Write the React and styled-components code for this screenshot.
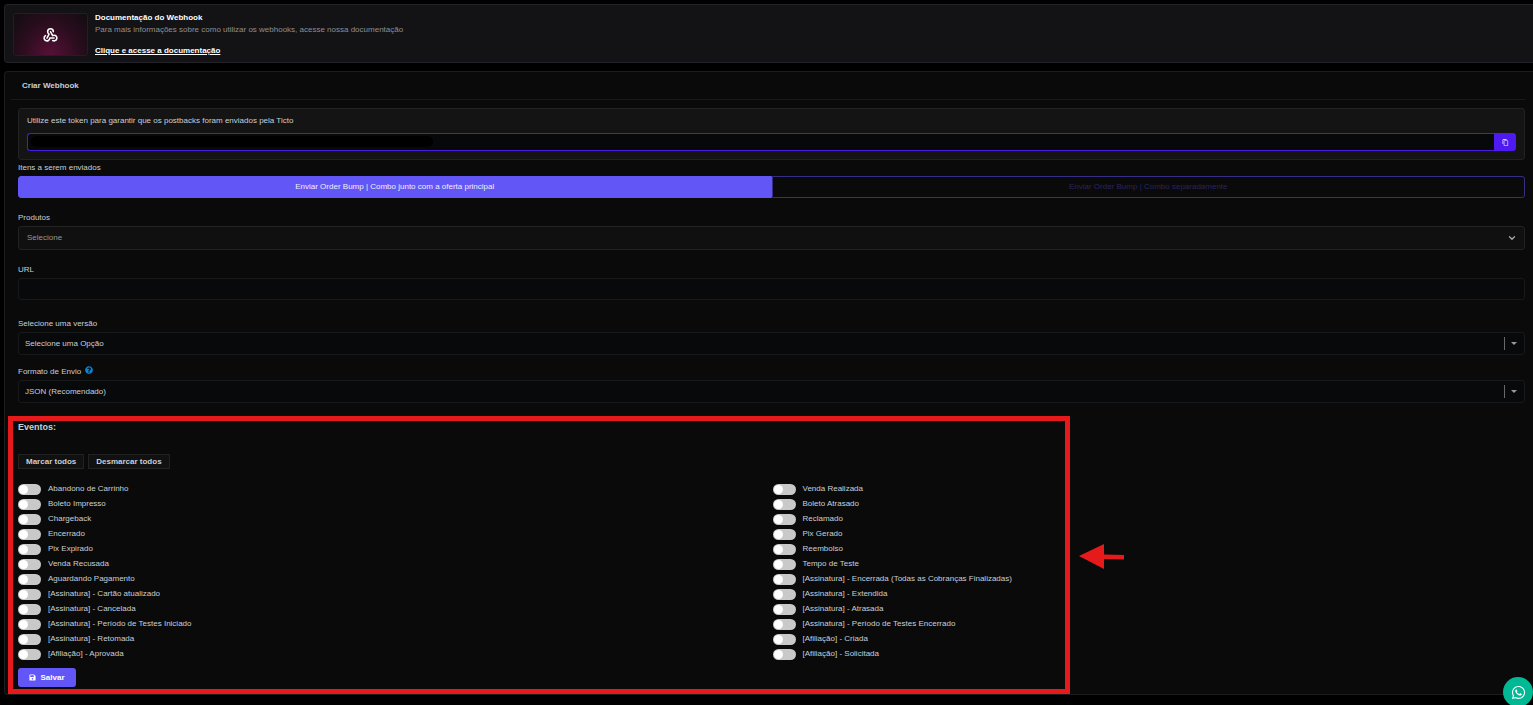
import React from "react";
import styled, { createGlobalStyle } from "styled-components";
import { FaWhatsapp, FaSave, FaQuestionCircle } from "react-icons/fa";
import { LuChevronDown } from "react-icons/lu";
import { MdContentCopy } from "react-icons/md";
import { TbWebhook } from "react-icons/tb";

const GlobalStyle = createGlobalStyle`
  * {
    box-sizing: border-box;
  }

  body {
    margin: 0;
    background-color: #000;
    color: #c9cfd8;
    font-family: "Liberation Sans", Arial, sans-serif;
    font-size: 8px;
    line-height: 12px;
  }

  button, input, select {
    margin: 0;
    font-family: inherit;
    font-size: inherit;
    line-height: inherit;
    color: inherit;
  }
`;

const Page = styled.main`
  display: flex;
  flex-direction: column;
  gap: 8px;
  min-height: 100vh;
  padding: 4px 0 10px 4px;
  overflow: hidden;
`;

const Banner = styled.section`
  display: flex;
  align-items: center;
  gap: 7px;
  padding: 7px 8px 5px;
  background-color: #131315;
  border: 1px solid #222228;
  border-right: 0;
  border-radius: 4px 0 0 4px;
`;

const BannerThumb = styled.div`
  display: flex;
  align-items: center;
  justify-content: center;
  width: 75px;
  height: 43px;
  color: #fff;
  background: radial-gradient(ellipse at 50% 110%, #5a1138 0%, #2c0d1f 55%, #110c10 100%);
  border: 1px solid #241d22;
  border-radius: 3px;
`;

const BannerText = styled.div`
  display: flex;
  flex-direction: column;
  align-items: flex-start;
`;

const BannerTitle = styled.h1`
  margin: 0;
  color: #fff;
  font-size: 8px;
  font-weight: 700;
`;

const BannerInfo = styled.p`
  margin: 0 0 9px;
  color: #8f8f92;
`;

const BannerLink = styled.a`
  color: #fff;
  font-weight: 700;
  text-decoration: underline;
`;

const Panel = styled.section`
  padding: 0 8px 7px 6px;
  background-color: #0a0a0a;
  border: 1px solid #1d1d1f;
  border-right: 0;
  border-radius: 4px 0 0 4px;
`;

const PanelTitle = styled.h2`
  margin: 0;
  padding: 8px 11px 7px;
  font-size: 8px;
  font-weight: 700;
  border-bottom: 1px solid #1a1a1b;
`;

const Form = styled.form`
  display: flex;
  flex-direction: column;
  padding: 8px 0 0 7px;
`;

const TokenBox = styled.div`
  display: flex;
  flex-direction: column;
  gap: 6px;
  padding: 6px 8px 8px;
  background-color: #141414;
  border: 1px solid #222;
  border-radius: 3px;
`;

const TokenRow = styled.div`
  display: flex;
  height: 18px;
`;

const TokenField = styled.div`
  position: relative;
  display: flex;
  flex: 1;
`;

const TokenInput = styled.input`
  flex: 1;
  min-width: 0;
  padding: 0 6px;
  background-color: #06080a;
  border: 1px solid #4a1ae0;
  border-right: 0;
  border-radius: 3px 0 0 3px;
  outline: 0;
`;

const TokenRedaction = styled.span`
  position: absolute;
  top: 3px;
  left: 4px;
  width: 402px;
  height: 11px;
  background-color: #000;
  border-radius: 5px;
`;

const CopyButton = styled.button`
  display: flex;
  align-items: center;
  justify-content: center;
  width: 22px;
  padding: 0;
  color: #fff;
  background-color: #4f1af0;
  border: 0;
  border-radius: 0 3px 3px 0;
`;

const Field = styled.div`
  display: flex;
  flex-direction: column;
  gap: 2px;
  margin-top: ${(props) => props.$space}px;
`;

const FieldLabel = styled.label`
  display: flex;
  align-items: ${(props) => (props.$help ? "flex-start" : "center")};
  gap: 4px;
  height: 12px;

  svg {
    color: #0a84d6;
  }
`;

const SendGroup = styled.div`
  display: grid;
  grid-template-columns: 1fr 1fr;
`;

const SendOption = styled.button`
  height: 22px;
  padding: 0;
  color: ${(props) => (props.$active ? "#f0eefc" : "#2a2460")};
  background-color: ${(props) => (props.$active ? "#6356f6" : "transparent")};
  border: 1px solid ${(props) => (props.$active ? "#6356f6" : "#352d86")};
  border-radius: ${(props) => (props.$active ? "3px 0 0 3px" : "0 3px 3px 0")};
`;

const SelectWrapper = styled.div`
  position: relative;
  display: flex;
`;

const Select = styled.select`
  flex: 1;
  height: ${(props) => (props.$light ? 24 : 23)}px;
  padding: 0 ${(props) => (props.$light ? 8 : 6)}px;
  appearance: none;
  color: ${(props) => (props.$light ? "#96969a" : "inherit")};
  background-color: ${(props) => (props.$light ? "#101010" : "#07090b")};
  border: 1px solid ${(props) => (props.$light ? "#222" : "#17191b")};
  border-radius: 3px;
`;

const SelectMark = styled.span`
  position: absolute;
  top: 0;
  right: 8px;
  bottom: 0;
  display: flex;
  align-items: center;
  gap: 6px;
  color: #aaa;
  pointer-events: none;
`;

const Separator = styled.span`
  width: 1px;
  height: 13px;
  background-color: #66686a;
`;

const Caret = styled.span`
  border: 3px solid transparent;
  border-top-color: #999;
  border-bottom: 0;
`;

const UrlInput = styled.input`
  height: 22px;
  padding: 0 8px;
  background-color: #07090b;
  border: 1px solid #17191b;
  border-radius: 3px;
`;

const Events = styled.section`
  position: relative;
  margin-top: 18px;
`;

const Highlight = styled.div`
  position: absolute;
  top: -5px;
  bottom: -7px;
  left: -10px;
  width: 70.5%;
  border: 5px solid #e61a1a;
  pointer-events: none;
`;

const Arrow = styled.svg`
  position: absolute;
  top: 123px;
  left: calc(70.5% - 1px);
  width: 46px;
  height: 26px;
`;

const EventsTitle = styled.h3`
  margin: 0 0 21px;
  font-size: 9px;
  font-weight: 700;
`;

const MarkButtons = styled.div`
  display: flex;
  gap: 4px;
`;

const MarkButton = styled.button`
  height: 15px;
  padding: 0 7px;
  font-weight: 700;
  background-color: #111;
  border: 1px solid #222;
`;

const EventGrid = styled.div`
  display: grid;
  grid-template-columns: 1fr 1fr;
  column-gap: 2px;
  padding-top: 12px;
`;

const EventItem = styled.label`
  display: flex;
  align-items: center;
  gap: 7px;
  height: 15px;
`;

const Toggle = styled.input`
  position: relative;
  top: 1px;
  width: 23px;
  height: 11px;
  appearance: none;
  background-color: #c9c9c9;
  border-radius: 6px;

  &::before {
    content: "";
    position: absolute;
    top: 1px;
    left: 1px;
    width: 9px;
    height: 9px;
    background-color: #fff;
    border-radius: 50%;
  }

  &:checked {
    background-color: #6356f6;
  }

  &:checked::before {
    left: 13px;
  }
`;

const SaveButton = styled.button`
  display: flex;
  align-items: center;
  justify-content: center;
  gap: 4px;
  width: 58px;
  height: 19px;
  margin-top: 7px;
  padding: 0;
  color: #fff;
  font-weight: 700;
  background-color: #6356f6;
  border: 0;
  border-radius: 3px;
`;

const WhatsappLink = styled.a`
  position: fixed;
  right: 0;
  bottom: -2px;
  display: flex;
  align-items: center;
  justify-content: center;
  width: 30px;
  height: 30px;
  color: #fff;
  background-color: #00b894;
  border-radius: 50%;
`;

const events = [
  ["Abandono de Carrinho", "Venda Realizada"],
  ["Boleto Impresso", "Boleto Atrasado"],
  ["Chargeback", "Reclamado"],
  ["Encerrado", "Pix Gerado"],
  ["Pix Expirado", "Reembolso"],
  ["Venda Recusada", "Tempo de Teste"],
  ["Aguardando Pagamento", "[Assinatura] - Encerrada (Todas as Cobranças Finalizadas)"],
  ["[Assinatura] - Cartão atualizado", "[Assinatura] - Extendida"],
  ["[Assinatura] - Cancelada", "[Assinatura] - Atrasada"],
  ["[Assinatura] - Período de Testes Iniciado", "[Assinatura] - Período de Testes Encerrado"],
  ["[Assinatura] - Retomada", "[Afiliação] - Criada"],
  ["[Afiliação] - Aprovada", "[Afiliação] - Solicitada"],
];

function DarkSelect({ id, option }) {
  return (
    <SelectWrapper>
      <Select id={id}>
        <option>{option}</option>
      </Select>
      <SelectMark>
        <Separator />
        <Caret />
      </SelectMark>
    </SelectWrapper>
  );
}

export default function App() {
  return (
    <>
      <GlobalStyle />
      <Page>
        <Banner>
          <BannerThumb>
            <TbWebhook size={17} strokeWidth={2.2} />
          </BannerThumb>
          <BannerText>
            <BannerTitle>Documentação do Webhook</BannerTitle>
            <BannerInfo>
              Para mais informações sobre como utilizar os webhooks, acesse nossa documentação
            </BannerInfo>
            <BannerLink href="#docs">Clique e acesse a documentação</BannerLink>
          </BannerText>
        </Banner>

        <Panel>
          <PanelTitle>Criar Webhook</PanelTitle>
          <Form onSubmit={(e) => e.preventDefault()}>
            <TokenBox>
              <label htmlFor="token">
                Utilize este token para garantir que os postbacks foram enviados pela Ticto
              </label>
              <TokenRow>
                <TokenField>
                  <TokenInput id="token" readOnly />
                  <TokenRedaction />
                </TokenField>
                <CopyButton type="button" aria-label="Copiar">
                  <MdContentCopy size={7} />
                </CopyButton>
              </TokenRow>
            </TokenBox>

            <Field $space={2}>
              <FieldLabel as="span" id="items">Itens a serem enviados</FieldLabel>
              <SendGroup role="group" aria-labelledby="items">
                <SendOption type="button" $active>
                  Enviar Order Bump | Combo junto com a oferta principal
                </SendOption>
                <SendOption type="button">Enviar Order Bump | Combo separadamente</SendOption>
              </SendGroup>
            </Field>

            <Field $space={14}>
              <FieldLabel htmlFor="products">Produtos</FieldLabel>
              <SelectWrapper>
                <Select id="products" $light>
                  <option>Selecione</option>
                </Select>
                <SelectMark>
                  <LuChevronDown size={10} strokeWidth={3} />
                </SelectMark>
              </SelectWrapper>
            </Field>

            <Field $space={14}>
              <FieldLabel htmlFor="url">URL</FieldLabel>
              <UrlInput id="url" />
            </Field>

            <Field $space={18}>
              <FieldLabel htmlFor="version">Selecione uma versão</FieldLabel>
              <DarkSelect id="version" option="Selecione uma Opção" />
            </Field>

            <Field $space={11}>
              <FieldLabel htmlFor="format" $help>
                Formato de Envio <FaQuestionCircle size={8} />
              </FieldLabel>
              <DarkSelect id="format" option="JSON (Recomendado)" />
            </Field>

            <Events>
              <EventsTitle>Eventos:</EventsTitle>
              <MarkButtons>
                <MarkButton type="button">Marcar todos</MarkButton>
                <MarkButton type="button">Desmarcar todos</MarkButton>
              </MarkButtons>
              <EventGrid>
                {events.flat().map((name) => (
                  <EventItem key={name}>
                    <Toggle type="checkbox" />
                    {name}
                  </EventItem>
                ))}
              </EventGrid>
              <SaveButton type="submit">
                <FaSave size={7} />
                Salvar
              </SaveButton>
              <Highlight />
              <Arrow viewBox="0 0 46 26">
                <path d="M0 12 25 0V10.500L45 11V15.500L25 15V25Z" fill="#e61a1a" />
              </Arrow>
            </Events>
          </Form>
        </Panel>
      </Page>
      <WhatsappLink href="#whatsapp" aria-label="WhatsApp">
        <FaWhatsapp size={15} />
      </WhatsappLink>
    </>
  );
}
